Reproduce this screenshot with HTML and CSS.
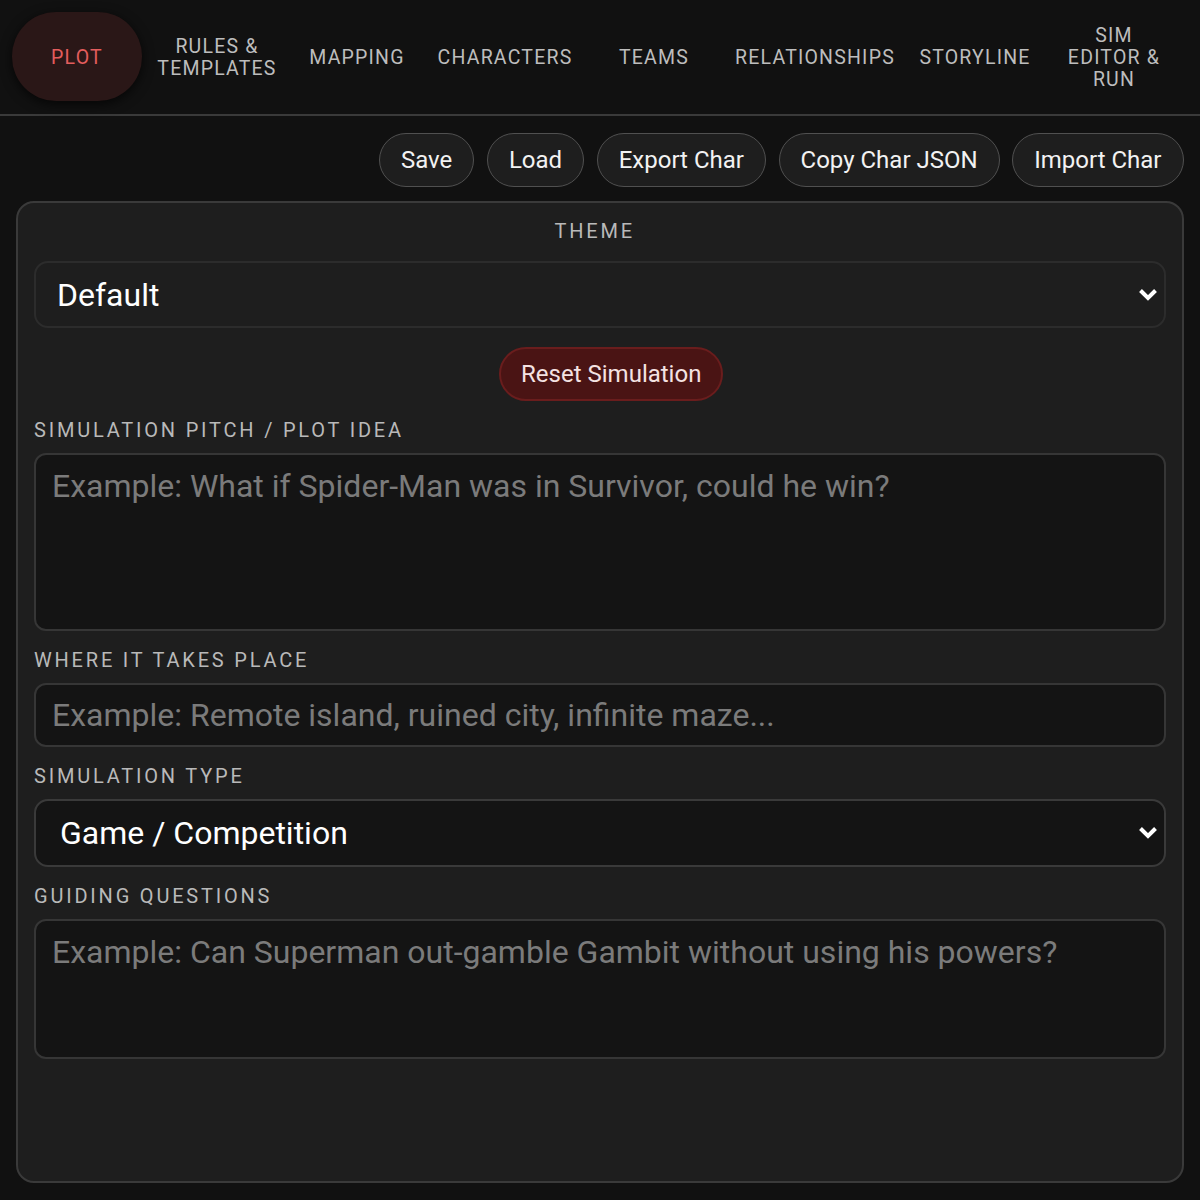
FILE: index.html
```html
<!DOCTYPE html>
<html lang="en">
<head>
<meta charset="utf-8">
<title>Sim Builder – Plot</title>
<link rel="stylesheet" href="styles.css">
</head>
<body>
<nav class="tabs">
  <button class="tab tab-active">PLOT</button>
  <button class="tab">RULES &amp; TEMPLATES</button>
  <button class="tab">MAPPING</button>
  <button class="tab">CHARACTERS</button>
  <button class="tab">TEAMS</button>
  <button class="tab">RELATIONSHIPS</button>
  <button class="tab">STORYLINE</button>
  <button class="tab tab-narrow">SIM EDITOR &amp; RUN</button>
</nav>

<main class="page">
  <div class="toolbar">
    <button class="pill">Save</button>
    <button class="pill">Load</button>
    <button class="pill">Export Char</button>
    <button class="pill">Copy Char JSON</button>
    <button class="pill">Import Char</button>
  </div>

  <section class="card">
    <div class="field-label centered">THEME</div>
    <div class="select-wrap">
      <select class="select select-theme">
        <option>Default</option>
      </select>
      <svg class="chevron" viewBox="0 0 20 13" width="20" height="13"><path d="M2.5 2.5 L10 10 L17.5 2.5" fill="none" stroke="#fff" stroke-width="4"/></svg>
    </div>

    <div class="reset-row">
      <button class="reset">Reset Simulation</button>
    </div>

    <label class="field-label">SIMULATION PITCH / PLOT IDEA</label>
    <textarea class="textbox pitch" placeholder="Example: What if Spider-Man was in Survivor, could he win?"></textarea>

    <label class="field-label">WHERE IT TAKES PLACE</label>
    <input class="textbox line" type="text" placeholder="Example: Remote island, ruined city, infinite maze...">

    <label class="field-label">SIMULATION TYPE</label>
    <div class="select-wrap">
      <select class="select select-type">
        <option>Game / Competition</option>
      </select>
      <svg class="chevron" viewBox="0 0 20 13" width="20" height="13"><path d="M2.5 2.5 L10 10 L17.5 2.5" fill="none" stroke="#fff" stroke-width="4"/></svg>
    </div>

    <label class="field-label">GUIDING QUESTIONS</label>
    <textarea class="textbox questions" placeholder="Example: Can Superman out-gamble Gambit without using his powers?"></textarea>
  </section>
</main>
</body>
</html>
```

FILE: styles.css
```css
* {
  box-sizing: border-box;
}

html, body {
  margin: 0;
  background: #111111;
  font-family: Roboto, "Liberation Sans", sans-serif;
  color: #eeeeee;
}

body {
  height: 100vh;
  display: flex;
  flex-direction: column;
}

/* top tab bar */
.tabs {
  display: grid;
  grid-template-columns: 130px 130px 130px 146px 132px 170px 130px 128px;
  column-gap: 10px;
  align-items: center;
  padding: 12px 0 13px 12px;
  border-bottom: 2px solid #3a3a3a;
}

.tab {
  height: 89px;
  background: none;
  border: none;
  border-radius: 44px;
  padding: 2px 5px 0;
  font-family: inherit;
  font-size: 19.5px;
  line-height: 22px;
  letter-spacing: 1.2px;
  color: #bdbdbd;
  text-align: center;
}

.tab-narrow {
  padding: 2px 13px 0;
}

.tab-active {
  background: #2a1717;
  color: #e35d5d;
  box-shadow: 0 3px 12px rgba(0, 0, 0, 0.7);
}

/* page body */
.page {
  flex: 1;
  display: flex;
  flex-direction: column;
  padding: 17px 16.5px 17px 16px;
  min-height: 0;
}

.toolbar {
  display: flex;
  justify-content: flex-end;
  gap: 12.6px;
}

.pill {
  height: 54px;
  padding: 0 21px;
  border: 1.5px solid #505050;
  border-radius: 27px;
  background: #1e1e1e;
  color: #f2f2f2;
  font-family: inherit;
  font-size: 24px;
}

.card {
  flex: 1;
  margin-top: 14px;
  display: flex;
  flex-direction: column;
  padding: 16px;
  background: #1e1e1e;
  border: 2px solid #3a3a3a;
  border-radius: 18px;
}

.field-label {
  display: block;
  font-size: 20px;
  line-height: 24px;
  letter-spacing: 2.8px;
  color: #b9b9b9;
  margin-bottom: 11px;
}

.field-label.centered {
  text-align: center;
  margin-right: 10px;
  margin-bottom: 18px;
}

.select-wrap {
  position: relative;
}

.select {
  width: 100%;
  appearance: none;
  -webkit-appearance: none;
  font-family: inherit;
  font-size: 32px;
  color: #ffffff;
  outline: none;
}

.select-theme {
  height: 67px;
  padding: 0 21px;
  background: #1e1e1e;
  border: 2px solid #2c2c2c;
  border-radius: 14px;
}

.select-type {
  height: 68px;
  padding: 0 24px;
  background: #141414;
  border: 2px solid #3a3a3a;
  border-radius: 14px;
  margin-bottom: 17px;
}

.chevron {
  position: absolute;
  right: 8px;
  top: 27px;
  pointer-events: none;
}

.reset-row {
  display: flex;
  justify-content: center;
  padding-left: 23px;
  margin: 19px 0 17px;
}

.reset {
  height: 54px;
  padding: 0 20px;
  background: #4a1414;
  border: 2px solid #6a1d1d;
  border-radius: 27px;
  color: #f4e2e2;
  font-family: inherit;
  font-size: 24px;
}

.textbox {
  display: block;
  width: 100%;
  background: #141414;
  border: 2px solid #363636;
  border-radius: 12px;
  color: #eeeeee;
  font-family: inherit;
  font-size: 32px;
  padding: 12px 16px;
  resize: none;
  outline: none;
  margin: 0 0 17px;
}

.textbox::placeholder {
  color: #7b7b7b;
}

.pitch {
  height: 178px;
}

.line {
  height: 64px;
  padding: 0 16px;
}

.questions {
  height: 140px;
}
```
